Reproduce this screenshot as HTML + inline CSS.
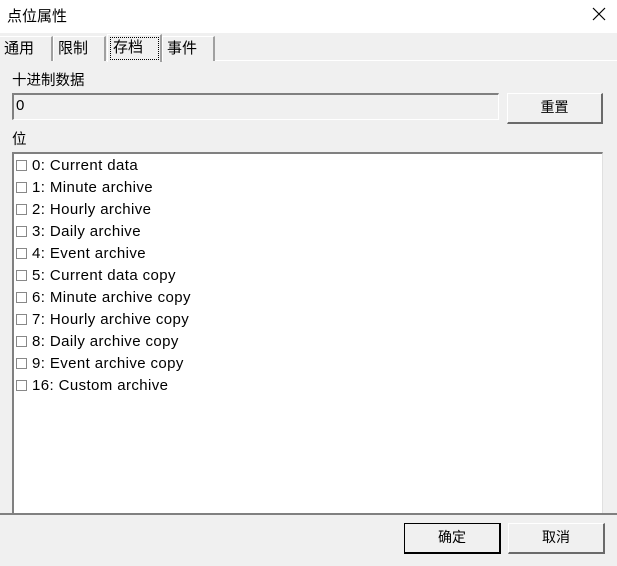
<!DOCTYPE html>
<html><head><meta charset="utf-8"><style>
*{margin:0;padding:0;box-sizing:border-box}
body{width:617px;height:566px;background:#f0f0f0;position:relative;overflow:hidden;font-family:"Liberation Sans","Noto Sans CJK SC",sans-serif;font-size:14px;color:#000}
.a{position:absolute}
.title{left:0;top:0;width:617px;height:33px;background:#fff}
.tab{top:36px;height:25px;background:#f0f0f0;border-top:1px solid #fff;border-left:1px solid #fff;border-right:2px solid #a0a0a0;font-size:15px;line-height:23px;padding-left:4px}
.btn{background:#f0f0f0;border-top:1px solid #fff;border-left:1px solid #fff;border-right:2px solid #6a6a6a;border-bottom:2px solid #6a6a6a;text-align:center;font-size:14px}
.item{left:16px;height:22px;line-height:22px;font-size:15px;letter-spacing:0.4px;white-space:nowrap}
.cb{display:inline-block;width:11px;height:11px;border:1px solid #888;background:#fff;vertical-align:-1px;margin-right:5px}
</style></head><body>
<div class="a title"></div>
<div class="a" style="left:7px;top:5px;font-size:15px">点位属性</div>
<svg class="a" style="left:592px;top:7px" width="14" height="14"><path d="M1 1L13 13M13 1L1 13" stroke="#000" stroke-width="1.2"/></svg>
<div class="a" style="left:0;top:60px;width:617px;height:1px;background:#fff"></div>
<div class="a tab" style="left:0;width:53px;border-left:none">通用</div>
<div class="a tab" style="left:53px;width:53px">限制</div>
<div class="a tab" style="left:162px;width:53px">事件</div>
<div class="a tab" style="left:107px;top:34px;height:28px;width:55px;border-bottom:none"><div style="position:absolute;left:2px;top:2px;width:49px;height:23px;border:1px dotted #000;padding-left:2px;line-height:20px">存档</div></div>
<div class="a" style="left:12px;top:69px;font-size:14.5px">十进制数据</div>
<div class="a" style="left:12px;top:93px;width:487px;height:27px;border-top:2px solid #808080;border-left:2px solid #808080;border-right:1px solid #fff;border-bottom:1px solid #fff;padding-left:2px;line-height:22px;font-size:15px">0</div>
<div class="a btn" style="left:507px;top:93px;width:96px;height:31px;line-height:27px">重置</div>
<div class="a" style="left:12px;top:128px;font-size:14.5px">位</div>
<div class="a" style="left:12px;top:152px;width:591px;height:362px;background:#fff;border-top:2px solid #808080;border-left:2px solid #808080;border-right:1px solid #e0e0e0"></div>
<div class="a item" style="top:155px"><span class="cb"></span>0: Current data</div>
<div class="a item" style="top:177px"><span class="cb"></span>1: Minute archive</div>
<div class="a item" style="top:199px"><span class="cb"></span>2: Hourly archive</div>
<div class="a item" style="top:221px"><span class="cb"></span>3: Daily archive</div>
<div class="a item" style="top:243px"><span class="cb"></span>4: Event archive</div>
<div class="a item" style="top:265px"><span class="cb"></span>5: Current data copy</div>
<div class="a item" style="top:287px"><span class="cb"></span>6: Minute archive copy</div>
<div class="a item" style="top:309px"><span class="cb"></span>7: Hourly archive copy</div>
<div class="a item" style="top:331px"><span class="cb"></span>8: Daily archive copy</div>
<div class="a item" style="top:353px"><span class="cb"></span>9: Event archive copy</div>
<div class="a item" style="top:375px"><span class="cb"></span>16: Custom archive</div>
<div class="a" style="left:0;top:513px;width:617px;height:2px;background:#808080"></div>
<div class="a" style="left:0;top:515px;width:617px;height:51px;background:#f0f0f0"></div>
<div class="a btn" style="left:404px;top:523px;width:97px;height:31px;line-height:27px;border:1px solid #000;border-right:2px solid #000;border-bottom:2px solid #000">确定</div>
<div class="a btn" style="left:508px;top:523px;width:97px;height:31px;line-height:27px">取消</div>
</body></html>
